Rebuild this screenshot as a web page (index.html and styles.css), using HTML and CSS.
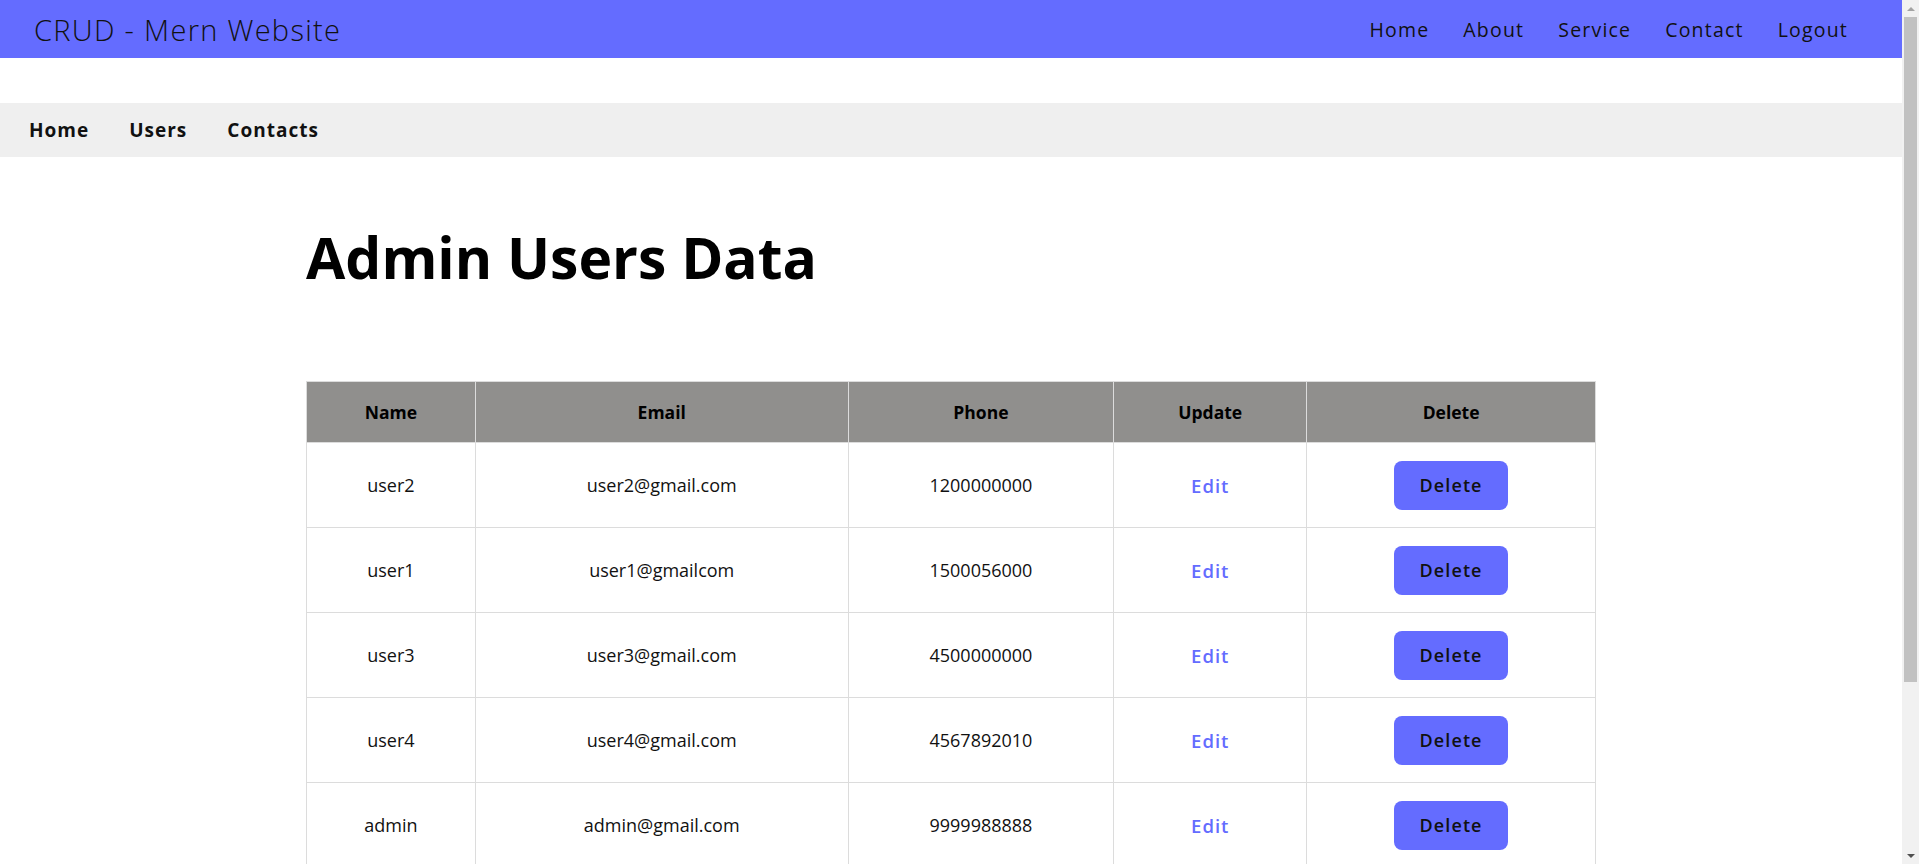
FILE: index.html
```html
<!DOCTYPE html>
<html lang="en">
<head>
<meta charset="utf-8">
<title>CRUD - Mern Website</title>
<link rel="stylesheet" href="styles.css">
</head>
<body>
<div class="page">
  <header class="navbar">
    <div class="brand">CRUD - Mern Website</div>
    <nav class="main-nav">
      <a href="#">Home</a>
      <a href="#">About</a>
      <a href="#">Service</a>
      <a href="#">Contact</a>
      <a href="#">Logout</a>
    </nav>
  </header>

  <nav class="admin-nav">
    <a href="#">Home</a>
    <a href="#">Users</a>
    <a href="#">Contacts</a>
  </nav>

  <main class="container">
    <h1 class="page-title">Admin Users Data</h1>
    <table class="users-table">
      <thead>
        <tr>
          <th class="col-name">Name</th>
          <th class="col-email">Email</th>
          <th class="col-phone">Phone</th>
          <th class="col-update">Update</th>
          <th class="col-delete">Delete</th>
        </tr>
      </thead>
      <tbody>
        <tr>
          <td>user2</td><td>user2@gmail.com</td><td>1200000000</td>
          <td><a class="edit-link" href="#">Edit</a></td>
          <td><button class="delete-btn">Delete</button></td>
        </tr>
        <tr>
          <td>user1</td><td>user1@gmailcom</td><td>1500056000</td>
          <td><a class="edit-link" href="#">Edit</a></td>
          <td><button class="delete-btn">Delete</button></td>
        </tr>
        <tr>
          <td>user3</td><td>user3@gmail.com</td><td>4500000000</td>
          <td><a class="edit-link" href="#">Edit</a></td>
          <td><button class="delete-btn">Delete</button></td>
        </tr>
        <tr>
          <td>user4</td><td>user4@gmail.com</td><td>4567892010</td>
          <td><a class="edit-link" href="#">Edit</a></td>
          <td><button class="delete-btn">Delete</button></td>
        </tr>
        <tr>
          <td>admin</td><td>admin@gmail.com</td><td>9999988888</td>
          <td><a class="edit-link" href="#">Edit</a></td>
          <td><button class="delete-btn">Delete</button></td>
        </tr>
      </tbody>
    </table>
  </main>
</div>

<div class="scrollbar" aria-hidden="true">
  <div class="scroll-btn"><span class="arrow-up"></span></div>
  <div class="scroll-track"><div class="scroll-thumb"></div></div>
  <div class="scroll-btn"><span class="arrow-down"></span></div>
</div>
</body>
</html>
```

FILE: styles.css
```css
* {
  box-sizing: border-box;
}

html, body {
  margin: 0;
  padding: 0;
}

body {
  font-family: "Open Sans", "Noto Sans", sans-serif;
  color: #111;
  background: #fff;
  padding-right: 17px;
}

a {
  text-decoration: none;
  color: inherit;
}

.navbar {
  height: 58px;
  background: #646cff;
  display: flex;
  align-items: center;
  justify-content: space-between;
  padding: 0 54px 0 34px;
}

.brand {
  font-size: 29px;
  font-weight: 300;
  letter-spacing: 1.3px;
  color: #111;
}

.main-nav {
  display: flex;
  gap: 34px;
}

.main-nav a {
  font-size: 19.5px;
  font-weight: 500;
  letter-spacing: 1.2px;
  color: #111;
}

.admin-nav {
  margin-top: 45px;
  height: 54px;
  background: #efefef;
  display: flex;
  align-items: center;
  gap: 40px;
  padding-left: 29px;
}

.admin-nav a {
  font-size: 19px;
  font-weight: 700;
  letter-spacing: 1px;
  color: #111;
}

.container {
  width: 1290px;
  margin: 0 auto;
  padding-bottom: 210px;
}

.page-title {
  font-size: 57px;
  font-weight: 700;
  line-height: 1.2;
  margin: 66px 0 90px;
  color: #000;
}

.users-table {
  width: 100%;
  border-collapse: collapse;
}

.users-table th,
.users-table td {
  border: 1px solid #dcdcdc;
  text-align: center;
}

.users-table th {
  background: #908f8d;
  height: 61px;
  font-size: 17.5px;
  font-weight: 700;
  color: #000;
}

.users-table td {
  height: 85px;
  font-size: 18px;
  color: #111;
}

.col-name { width: 169px; }
.col-email { width: 373px; }
.col-phone { width: 266px; }
.col-update { width: 193px; }
.col-delete { width: 289px; }

.edit-link {
  color: #646cff;
  font-size: 18.5px;
  font-weight: 600;
  letter-spacing: 1px;
}

.delete-btn {
  width: 114px;
  height: 49px;
  border: none;
  border-radius: 8px;
  background: #646cff;
  color: #111;
  font-family: inherit;
  font-size: 18px;
  font-weight: 600;
  letter-spacing: 1.1px;
  cursor: pointer;
}

/* Fake classic browser scrollbar */
.scrollbar {
  position: fixed;
  top: 0;
  right: 0;
  width: 17px;
  height: 100vh;
  background: #f1f1f1;
  display: flex;
  flex-direction: column;
}

.scroll-btn {
  height: 17px;
  flex: none;
  display: flex;
  align-items: center;
  justify-content: center;
}

.arrow-up,
.arrow-down {
  width: 0;
  height: 0;
  border-left: 4px solid transparent;
  border-right: 4px solid transparent;
}

.arrow-up {
  border-bottom: 4px solid #a3a3a3;
}

.arrow-down {
  border-top: 4px solid #505050;
}

.scroll-track {
  flex: 1;
  padding: 0 2px;
}

.scroll-thumb {
  height: 665px;
  background: #c1c1c1;
}
```
